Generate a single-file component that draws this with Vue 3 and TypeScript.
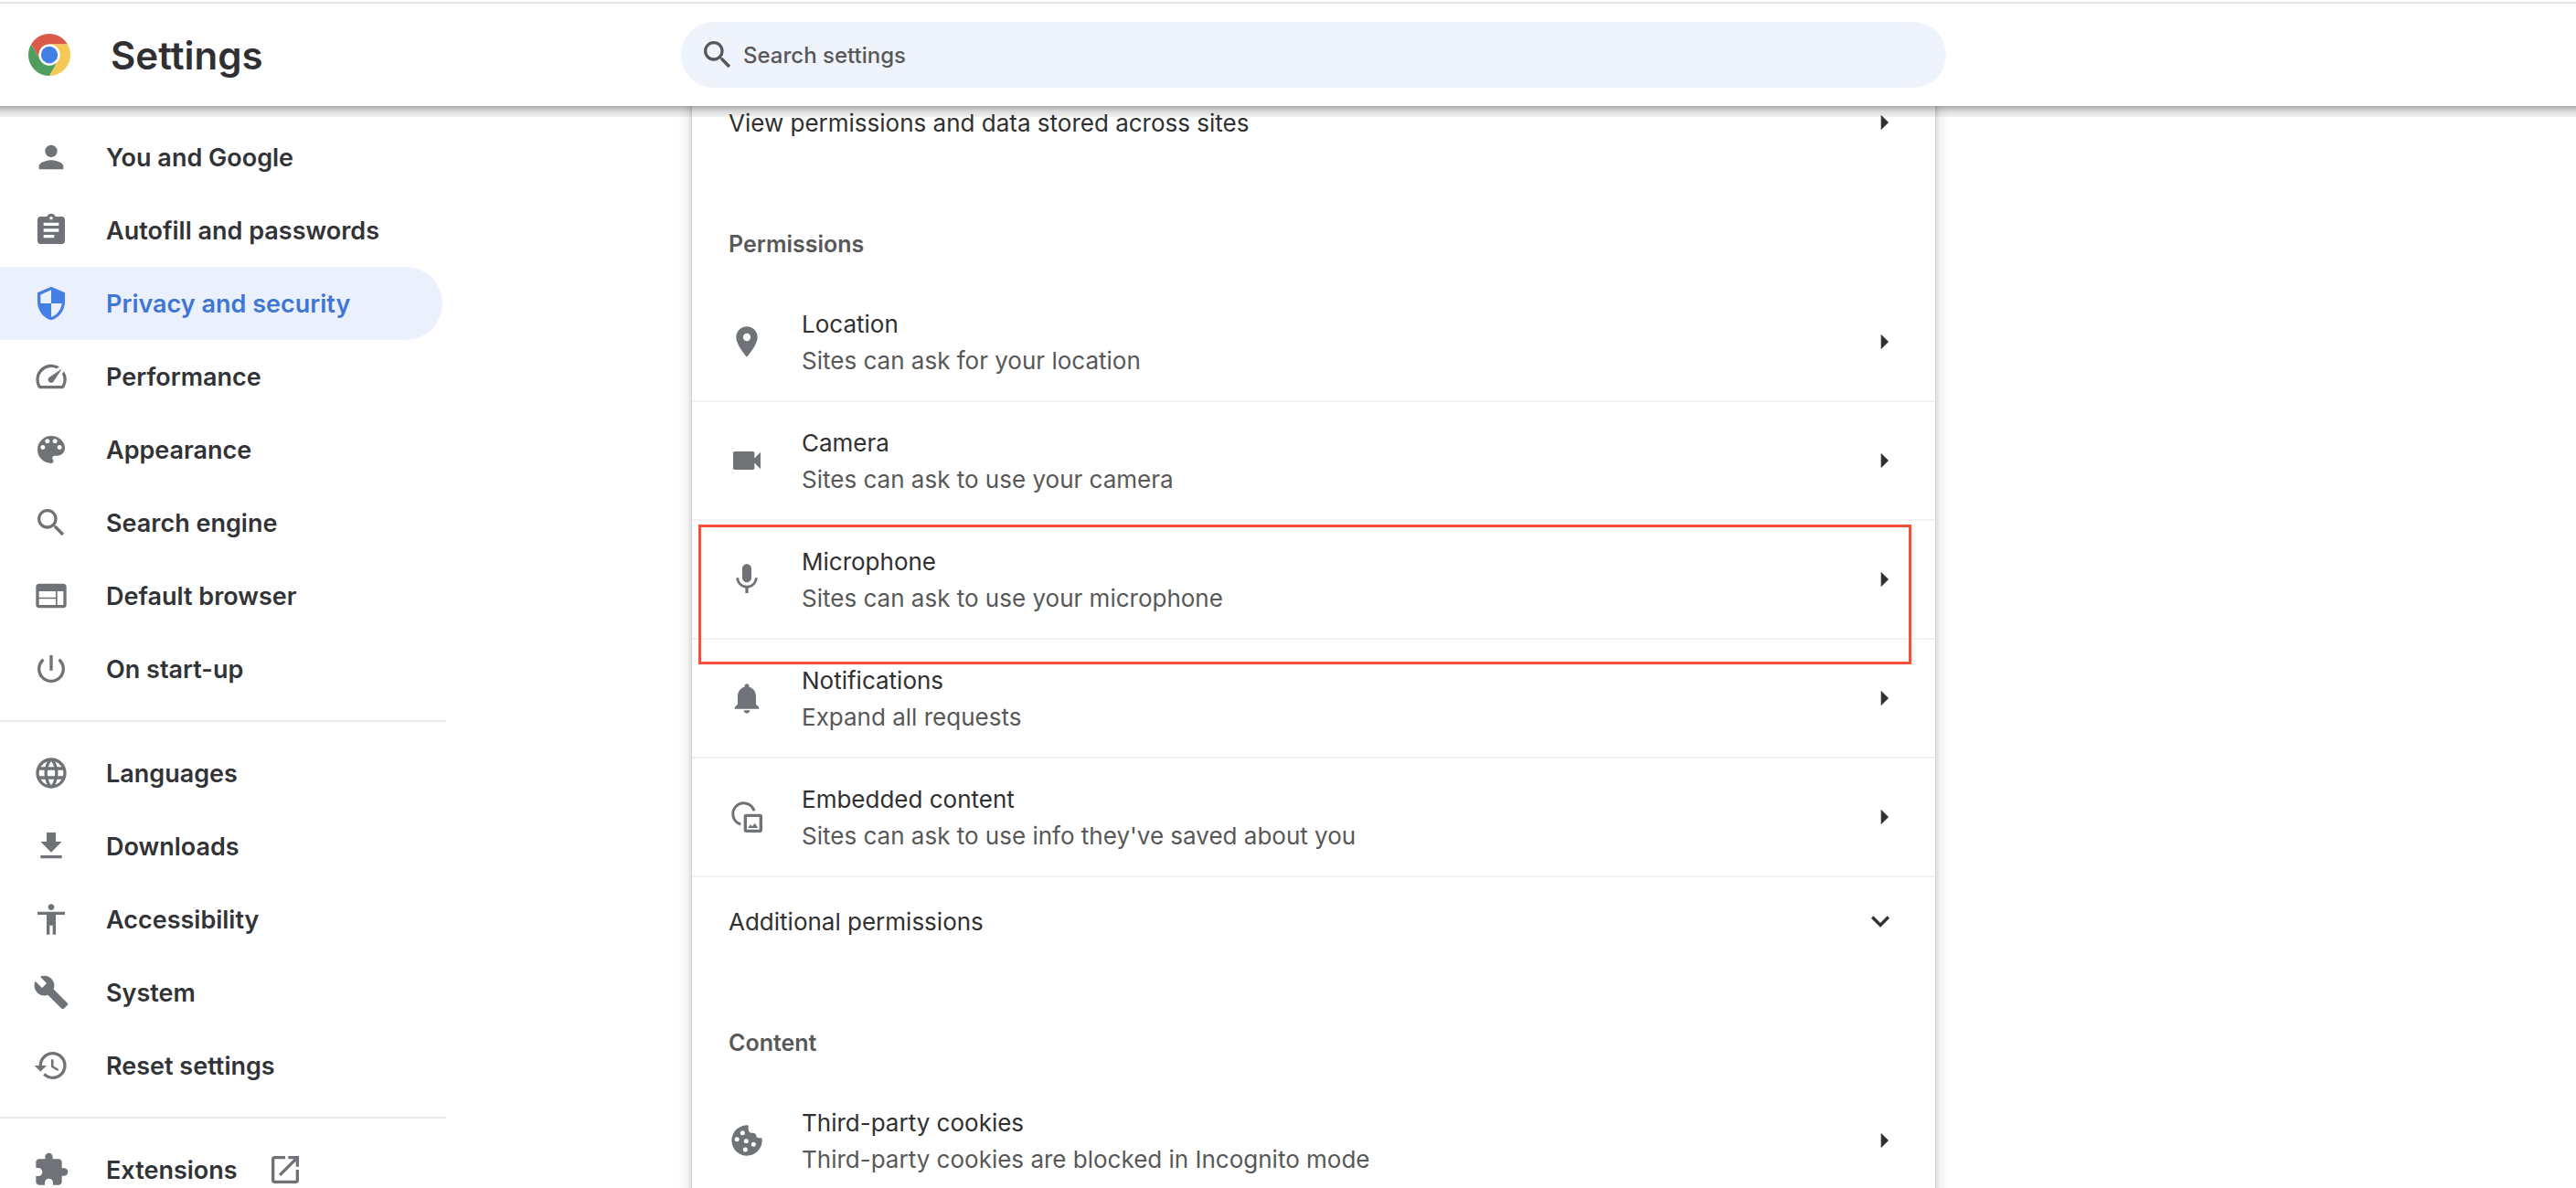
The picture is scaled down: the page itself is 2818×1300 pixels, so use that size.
<script setup lang="ts">
interface NavItem {
  label: string
  icon: string
  active?: boolean
  external?: boolean
}

interface Permission {
  title: string
  detail: string
  icon: string
  highlighted?: boolean
}

const icons: Record<string, string> = {
  person: 'M12 12c2.21 0 4-1.79 4-4s-1.79-4-4-4-4 1.79-4 4 1.79 4 4 4zm0 2c-2.67 0-8 1.34-8 4v2h16v-2c0-2.66-5.33-4-8-4z',
  assignment: 'M19 3h-4.18C14.4 1.84 13.3 1 12 1c-1.3 0-2.4.84-2.82 2H5c-1.1 0-2 .9-2 2v14c0 1.1.9 2 2 2h14c1.1 0 2-.9 2-2V5c0-1.1-.9-2-2-2zm-7 0c.55 0 1 .45 1 1s-.45 1-1 1-1-.45-1-1 .45-1 1-1zm2 14H7v-2h7v2zm3-4H7v-2h10v2zm0-4H7V7h10v2z',
  shield: 'M12 1L3 5v6c0 5.55 3.84 10.74 9 12 5.16-1.26 9-6.45 9-12V5l-9-4zm0 10.99h7c-.53 4.12-3.28 7.79-7 8.94V12H5V6.3l7-3.11v8.8z',
  speed: 'M20.38 8.57l-1.23 1.85a8 8 0 0 1-.22 7.58H5.07A8 8 0 0 1 15.58 6.85l1.85-1.23A10 10 0 0 0 3.35 19a2 2 0 0 0 1.72 1h13.85a2 2 0 0 0 1.74-1 10 10 0 0 0-.27-10.44zm-9.79 6.84a2 2 0 0 0 2.83 0l5.66-8.49-8.49 5.66a2 2 0 0 0 0 2.83z',
  palette: 'M12 3a9 9 0 0 0 0 18c.83 0 1.5-.67 1.5-1.5 0-.39-.15-.74-.39-1.01-.23-.26-.38-.61-.38-.99 0-.83.67-1.5 1.5-1.5H16c2.76 0 5-2.24 5-5 0-4.42-4.03-8-9-8zm-5.5 9c-.83 0-1.5-.67-1.5-1.5S5.67 9 6.5 9 8 9.67 8 10.5 7.33 12 6.5 12zm3-4C8.67 8 8 7.33 8 6.5S8.67 5 9.5 5s1.5.67 1.5 1.5S10.33 8 9.5 8zm5 0c-.83 0-1.5-.67-1.5-1.5S13.67 5 14.5 5s1.5.67 1.5 1.5S15.33 8 14.5 8zm3 4c-.83 0-1.5-.67-1.5-1.5S16.67 9 17.5 9s1.5.67 1.5 1.5-.67 1.5-1.5 1.5z',
  search: 'M15.5 14h-.79l-.28-.27A6.471 6.471 0 0 0 16 9.5 6.5 6.5 0 1 0 9.5 16c1.61 0 3.09-.59 4.23-1.57l.27.28v.79l5 4.99L20.49 19l-4.99-5zm-6 0C7.01 14 5 11.99 5 9.5S7.01 5 9.5 5 14 7.01 14 9.5 11.99 14 9.5 14z',
  web: 'M20 4H4c-1.1 0-1.99.9-1.99 2L2 18c0 1.1.9 2 2 2h16c1.1 0 2-.9 2-2V6c0-1.1-.9-2-2-2zm-5 14H4v-4h11v4zm0-5H4V9h11v4zm5 5h-4V9h4v9z',
  power: 'M13 3h-2v10h2V3zm4.83 2.17l-1.42 1.42C17.99 7.86 19 9.81 19 12c0 3.87-3.13 7-7 7s-7-3.13-7-7c0-2.19 1.01-4.14 2.58-5.42L6.17 5.17C4.23 6.82 3 9.26 3 12c0 4.97 4.03 9 9 9s9-4.03 9-9c0-2.74-1.23-5.18-3.17-6.83z',
  globe: 'M11.99 2C6.47 2 2 6.48 2 12s4.47 10 9.99 10C17.52 22 22 17.52 22 12S17.52 2 11.99 2zm6.93 6h-2.95a15.65 15.65 0 0 0-1.38-3.56A8.03 8.03 0 0 1 18.92 8zM12 4.04c.83 1.2 1.48 2.53 1.91 3.96h-3.82c.43-1.43 1.08-2.76 1.91-3.96zM4.26 14C4.1 13.36 4 12.69 4 12s.1-1.36.26-2h3.38c-.08.66-.14 1.32-.14 2s.06 1.34.14 2H4.26zm.82 2h2.95c.32 1.25.78 2.45 1.38 3.56A7.987 7.987 0 0 1 5.08 16zm2.95-8H5.08a7.987 7.987 0 0 1 4.33-3.56A15.65 15.65 0 0 0 8.03 8zM12 19.96c-.83-1.2-1.48-2.53-1.91-3.96h3.82c-.43 1.43-1.08 2.76-1.91 3.96zM14.34 14H9.66c-.09-.66-.16-1.32-.16-2s.07-1.35.16-2h4.68c.09.65.16 1.32.16 2s-.07 1.34-.16 2zm.25 5.56c.6-1.11 1.06-2.31 1.38-3.56h2.95a8.03 8.03 0 0 1-4.33 3.56zM16.36 14c.08-.66.14-1.32.14-2s-.06-1.34-.14-2h3.38c.16.64.26 1.31.26 2s-.1 1.36-.26 2h-3.38z',
  download: 'M19 9h-4V3H9v6H5l7 7 7-7zM5 18v2h14v-2H5z',
  accessibility: 'M12 2c1.1 0 2 .9 2 2s-.9 2-2 2-2-.9-2-2 .9-2 2-2zm9 7h-6v13h-2v-6h-2v6H9V9H3V7h18v2z',
  wrench: 'M22.7 19l-9.1-9.1c.9-2.3.4-5-1.5-6.9-2-2-5-2.4-7.4-1.3L9 6 6 9 1.6 4.7C.4 7.1.9 10.1 2.9 12.1c1.9 1.9 4.6 2.4 6.9 1.5l9.1 9.1c.4.4 1 .4 1.4 0l2.3-2.3c.5-.4.5-1.1.1-1.4z',
  restore: 'M13 3c-4.97 0-9 4.03-9 9H1l3.89 3.89.07.14L9 12H6c0-3.87 3.13-7 7-7s7 3.13 7 7-3.13 7-7 7c-1.93 0-3.68-.79-4.94-2.06l-1.42 1.42C8.27 19.99 10.51 21 13 21c4.97 0 9-4.03 9-9s-4.03-9-9-9zm-1 5v5l4.28 2.54.72-1.21-3.5-2.08V8H12z',
  extension: 'M20.5 11H19V7c0-1.1-.9-2-2-2h-4V3.5C13 2.12 11.88 1 10.5 1S8 2.12 8 3.5V5H4c-1.1 0-1.99.9-1.99 2v3.8H3.5c1.49 0 2.7 1.21 2.7 2.7s-1.21 2.7-2.7 2.7H2V20c0 1.1.9 2 2 2h3.8v-1.5c0-1.49 1.21-2.7 2.7-2.7 1.49 0 2.7 1.21 2.7 2.7V22H17c1.1 0 2-.9 2-2v-4h1.5c1.38 0 2.5-1.12 2.5-2.5S21.88 11 20.5 11z',
  launch: 'M19 19H5V5h7V3H5c-1.11 0-2 .9-2 2v14c0 1.1.89 2 2 2h14c1.1 0 2-.9 2-2v-7h-2v7zM14 3v2h3.59l-9.83 9.83 1.41 1.41L19 6.41V10h2V3h-7z',
  location: 'M12 2C8.13 2 5 5.13 5 9c0 5.25 7 13 7 13s7-7.75 7-13c0-3.87-3.13-7-7-7zm0 9.5a2.5 2.5 0 0 1 0-5 2.5 2.5 0 0 1 0 5z',
  camera: 'M17 10.5V7c0-.55-.45-1-1-1H4c-.55 0-1 .45-1 1v10c0 .55.45 1 1 1h12c.55 0 1-.45 1-1v-3.5l4 4v-11l-4 4z',
  microphone: 'M12 14c1.66 0 2.99-1.34 2.99-3L15 5c0-1.66-1.34-3-3-3S9 3.34 9 5v6c0 1.66 1.34 3 3 3zm5.3-3c0 3-2.54 5.1-5.3 5.1S6.7 14 6.7 11H5c0 3.41 2.72 6.23 6 6.72V21h2v-3.28c3.28-.48 6-3.3 6-6.72h-1.7z',
  bell: 'M12 22c1.1 0 2-.9 2-2h-4c0 1.1.89 2 2 2zm6-6v-5c0-3.07-1.64-5.64-4.5-6.32V4c0-.83-.67-1.5-1.5-1.5s-1.5.67-1.5 1.5v.68C7.63 5.36 6 7.92 6 11v5l-2 2v1h16v-1l-2-2z',
}

const navGroups: NavItem[][] = [
  [
    { label: 'You and Google', icon: 'person' },
    { label: 'Autofill and passwords', icon: 'assignment' },
    { label: 'Privacy and security', icon: 'shield', active: true },
    { label: 'Performance', icon: 'speed' },
    { label: 'Appearance', icon: 'palette' },
    { label: 'Search engine', icon: 'search' },
    { label: 'Default browser', icon: 'web' },
    { label: 'On start-up', icon: 'power' },
  ],
  [
    { label: 'Languages', icon: 'globe' },
    { label: 'Downloads', icon: 'download' },
    { label: 'Accessibility', icon: 'accessibility' },
    { label: 'System', icon: 'wrench' },
    { label: 'Reset settings', icon: 'restore' },
  ],
  [{ label: 'Extensions', icon: 'extension', external: true }],
]

const permissions: Permission[] = [
  { title: 'Location', detail: 'Sites can ask for your location', icon: 'location' },
  { title: 'Camera', detail: 'Sites can ask to use your camera', icon: 'camera' },
  { title: 'Microphone', detail: 'Sites can ask to use your microphone', icon: 'microphone', highlighted: true },
  { title: 'Notifications', detail: 'Expand all requests', icon: 'bell' },
  { title: 'Embedded content', detail: "Sites can ask to use info they've saved about you", icon: 'embedded' },
]
</script>

<template>
  <div class="page">
    <header class="toolbar">
      <div class="brand">
        <svg class="logo" viewBox="0 0 48 48" aria-hidden="true">
          <path fill="#da5a49" d="M24 12H44.78A24 24 0 0 0 3.22 12L13.61 30A12 12 0 0 1 24 12z" />
          <path fill="#4f9e5d" d="M3.22 12A24 24 0 0 0 24 48L34.39 30A12 12 0 0 1 13.61 30z" />
          <path fill="#f6c957" d="M44.78 12A24 24 0 0 1 24 48L34.39 30A12 12 0 0 0 24 12z" />
          <circle cx="24" cy="24" r="12" fill="#fff" />
          <circle cx="24" cy="24" r="9.6" fill="#447fe5" />
        </svg>
        <h1>Settings</h1>
      </div>
      <label class="search">
        <svg class="icon" viewBox="0 0 24 24" aria-hidden="true"><path :d="icons.search" /></svg>
        <input type="search" placeholder="Search settings" aria-label="Search settings" />
      </label>
    </header>

    <div class="body">
      <nav class="sidebar" aria-label="Settings sections">
        <ul v-for="(group, g) in navGroups" :key="g">
          <li v-for="item in group" :key="item.label">
            <a href="#" :class="{ active: item.active }">
              <svg class="icon" viewBox="0 0 24 24" aria-hidden="true"><path :d="icons[item.icon]" /></svg>
              <span>{{ item.label }}</span>
              <svg v-if="item.external" class="icon" viewBox="0 0 24 24" aria-hidden="true"><path :d="icons.launch" /></svg>
            </a>
          </li>
        </ul>
      </nav>

      <main class="card">
        <button class="row simple" type="button">
          <span class="label">View permissions and data stored across sites</span>
          <svg class="icon arrow" viewBox="0 0 24 24" aria-hidden="true"><path d="M12.4 7l5 5-5 5z" /></svg>
        </button>

        <h2>Permissions</h2>
        <button
          v-for="p in permissions"
          :key="p.title"
          class="row"
          :class="{ highlighted: p.highlighted }"
          type="button"
        >
          <svg class="icon" viewBox="0 0 24 24" aria-hidden="true">
            <template v-if="p.icon === 'embedded'">
              <path d="M16.8 8A7.1 7.1 0 1 0 8 16.8" fill="none" stroke="currentColor" stroke-width="1.8" />
              <rect x="11" y="11" width="10.2" height="10.2" rx="0.6" fill="none" stroke="currentColor" stroke-width="2" />
              <path d="M12.6 19.2l1.8-2.2 1.1 1.2 1.8-2.2 2 3.2z" />
            </template>
            <path v-else :d="icons[p.icon]" />
          </svg>
          <span class="label">
            {{ p.title }}
            <small>{{ p.detail }}</small>
          </span>
          <svg class="icon arrow" viewBox="0 0 24 24" aria-hidden="true"><path d="M12.4 7l5 5-5 5z" /></svg>
        </button>
        <button class="row simple" type="button" aria-expanded="false">
          <span class="label">Additional permissions</span>
          <svg class="icon arrow" viewBox="0 0 24 24" aria-hidden="true">
            <path d="M16.59 8.59L12 13.17 7.41 8.59 6 10l6 6 6-6z" />
          </svg>
        </button>

        <h2>Content</h2>
        <button class="row" type="button">
          <svg class="icon" viewBox="0 0 24 24" aria-hidden="true">
            <path d="M13 2.05V4.5C13 6 14 7.3 15.6 7.1 17.4 7 18.4 8 18.2 9.6 19.2 10.4 20.6 10.5 21.9 10.4A10 10 0 1 1 13 2.05z" />
            <g fill="#fff">
              <circle cx="9.2" cy="7" r="1.5" />
              <circle cx="5.5" cy="11.2" r="1.5" />
              <circle cx="11.6" cy="12.5" r="1.5" />
              <circle cx="16.4" cy="14.6" r="1.5" />
              <circle cx="11" cy="18" r="1.5" />
            </g>
          </svg>
          <span class="label">
            Third-party cookies
            <small>Third-party cookies are blocked in Incognito mode</small>
          </span>
          <svg class="icon arrow" viewBox="0 0 24 24" aria-hidden="true"><path d="M12.4 7l5 5-5 5z" /></svg>
        </button>
      </main>
    </div>
  </div>
</template>

<style>
body {
  margin: 0;
  background: #fff;
}
</style>

<style scoped>
* {
  box-sizing: border-box;
}

.page {
  display: flex;
  flex-direction: column;
  height: 100vh;
  overflow: hidden;
  background: #fff;
  color: #303033;
  font-family: Inter, "Liberation Sans", sans-serif;
}

.icon {
  flex: none;
  width: 40px;
  height: 40px;
  fill: currentColor;
  color: #6f7377;
}

.toolbar {
  position: relative;
  z-index: 2;
  flex: none;
  display: grid;
  grid-template-columns: calc(50% - 664px) minmax(0, 1384px);
  align-items: center;
  height: 116px;
  padding-top: 4px;
  background: linear-gradient(#fff 2px, #e5e5e5 2px, #e5e5e5 4px, #fff 4px);
}

.toolbar::after {
  content: "";
  position: absolute;
  top: 100%;
  left: 0;
  right: 0;
  height: 12px;
  background: linear-gradient(rgba(0, 0, 0, 0.32), rgba(0, 0, 0, 0.14) 50%, rgba(0, 0, 0, 0.05));
}

.brand {
  display: flex;
  align-items: center;
  gap: 44px;
  padding-left: 31px;
}

.logo {
  flex: none;
  width: 46px;
  height: 46px;
}

h1 {
  margin: 0;
  padding-top: 2px;
  font-size: 42px;
  font-weight: 600;
  line-height: 56px;
}

.search {
  display: flex;
  align-items: center;
  gap: 8px;
  height: 72px;
  padding: 0 20px;
  border-radius: 36px;
  background: #eff3fb;
}

.search .icon {
  color: #575857;
}

.search input {
  flex: 1;
  min-width: 0;
  padding: 2px 0 0;
  border: 0;
  outline: 0;
  background: none;
  color: #575857;
  font: 500 24px/36px Inter, "Liberation Sans", sans-serif;
}

.search input::placeholder {
  color: #575857;
  opacity: 1;
}

.body {
  flex: 1;
  min-height: 0;
  display: grid;
  grid-template-columns: minmax(488px, calc(50% - 652px)) minmax(0, 1360px);
  align-items: start;
}

.sidebar {
  width: 488px;
  padding-top: 16px;
}

ul {
  margin: 0;
  padding: 0;
  list-style: none;
}

ul + ul {
  margin-top: 16px;
  padding-top: 16px;
  border-top: 2px solid #e9e9e9;
}

.sidebar a {
  display: flex;
  align-items: center;
  height: 80px;
  margin-right: 4px;
  padding-left: 36px;
  border-radius: 0 40px 40px 0;
  color: #323337;
  font-size: 27px;
  font-weight: 600;
  text-decoration: none;
}

.sidebar span {
  margin: 0 32px 0 40px;
}

.sidebar .active {
  background: #eaf1fd;
  color: #3f76d6;
}

.sidebar .active .icon {
  color: #447fe5;
}

.card {
  margin-top: -30px;
  background: #fff;
  box-shadow: 0 2px 4px rgba(60, 64, 67, 0.3), 0 4px 12px 4px rgba(60, 64, 67, 0.15);
}

h2 {
  margin: 0;
  padding: 65px 40px 23px;
  color: #575857;
  font-size: 25px;
  font-weight: 600;
  line-height: 40px;
}

.row {
  position: relative;
  display: flex;
  align-items: center;
  gap: 40px;
  width: 100%;
  height: 128px;
  padding: 0 40px;
  border: 0;
  background: none;
  color: #303030;
  font: 400 26px/40px Inter, "Liberation Sans", sans-serif;
  text-align: left;
}

.row + .row {
  height: 130px;
  border-top: 2px solid #f1f1f1;
}

.simple {
  height: 96px;
}

.row + .simple {
  height: 98px;
}

.label {
  flex: 1;
  padding-top: 2px;
}

small {
  display: block;
  color: #575857;
  font-size: inherit;
}

.row .arrow {
  color: #303030;
}

.highlighted {
  z-index: 1;
}

.highlighted::after {
  content: "";
  position: absolute;
  top: 4px;
  left: 7px;
  right: 26px;
  height: 147px;
  border: 3px solid #f45138;
  pointer-events: none;
}
</style>
